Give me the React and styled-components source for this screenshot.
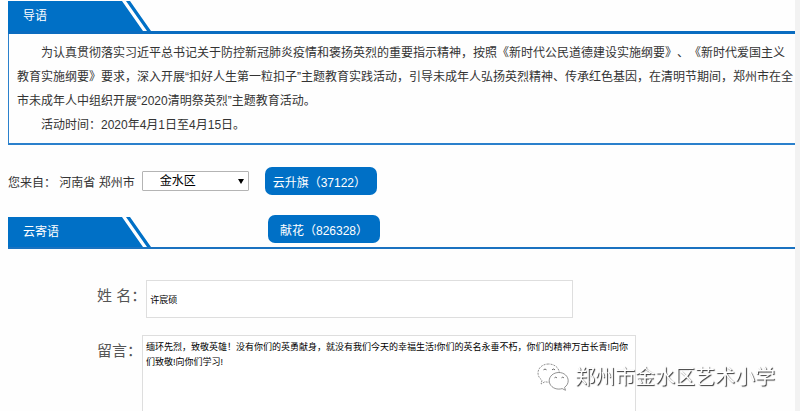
import React, { useState } from "react";
import styled, { createGlobalStyle } from "styled-components";

const GlobalStyle = createGlobalStyle`
  * {
    box-sizing: border-box;
  }

  body {
    margin: 0;
    background-color: #fefefe;
    color: #333;
    font-family: "Liberation Sans", "Noto Sans CJK SC", sans-serif;
    font-size: 12px;
    text-spacing-trim: space-all;
  }

  button,
  input,
  select,
  textarea {
    font-family: inherit;
  }
`;

const Page = styled.div`
  display: flex;
  height: 100vh;
  overflow: hidden auto;
  scrollbar-width: none;
`;

const Content = styled.main`
  flex: 1;
  min-width: 0;
  padding: 1px 0 0 8px;
`;

const SideStrip = styled.div`
  position: sticky;
  top: 0;
  width: 5px;
  height: 100vh;
  background-color: #f2f2f2;
`;

const SectionHeader = styled.header`
  display: flex;
  align-items: flex-end;
  border-bottom: ${({ $thick }) => ($thick ? "3px solid #0a6cc0" : "2px solid #1a72c0")};
`;

const SectionTitle = styled.h2`
  width: 143px;
  height: 30px;
  margin: 0;
  padding-left: 15px;
  background-color: #0070c6;
  color: white;
  font-size: 12px;
  font-weight: normal;
  line-height: 30px;
  clip-path: polygon(0 0, 114px 0, 135px 100%, 139px 100%, 118px 0, 122px 0, 143px 100%, 0 100%);
`;

const IntroBody = styled.div`
  padding: 7px 0 6px 8px;
  border: solid #2a80cc;
  border-width: 0 0 2px 1px;
`;

const Paragraph = styled.p`
  margin: 0;
  line-height: 24px;
  text-indent: 24px;
`;

const OriginRow = styled.div`
  display: flex;
  align-items: center;
  padding: 22px 0 20px;
`;

const OriginLabel = styled.label`
  margin-right: 7px;
`;

const SelectWrap = styled.span`
  position: relative;
  width: 107px;
  margin-right: 16px;

  &::after {
    content: "";
    position: absolute;
    top: 8px;
    right: 5px;
    border: 3px solid transparent;
    border-top: 5px solid black;
    border-bottom: 0;
    pointer-events: none;
  }
`;

const Select = styled.select`
  display: block;
  width: 100%;
  height: 20px;
  padding: 0 17px;
  border: 1px solid #b4b4b4;
  border-radius: 1px;
  background-color: white;
  color: black;
  font-size: 12px;
  appearance: none;
`;

const ActionButton = styled.button`
  width: 112px;
  height: 28px;
  padding: 0 8px;
  border: none;
  border-radius: 7px;
  background-color: #0070c6;
  color: white;
  font-size: 12px;
  text-align: ${({ $align }) => $align || "center"};
  white-space: nowrap;
  cursor: pointer;
`;

const FlowerButton = styled(ActionButton)`
  margin: 0 0 4px 117px;
`;

const Form = styled.form`
  display: flex;
  flex-direction: column;
  gap: 17px;
  padding: 31px 16px 20px 89px;
`;

const Field = styled.div`
  display: flex;
  align-items: flex-start;
`;

const FieldLabel = styled.label`
  flex-shrink: 0;
  color: #555;
  font-size: 15px;
  line-height: 32px;
`;

const NameInput = styled.input`
  flex: 0 1 427px;
  min-width: 0;
  height: 38px;
  padding: 0 3px;
  border: 1px solid #dedede;
  background-color: white;
  color: black;
  font-size: 9px;
`;

const MessageInput = styled.textarea`
  flex: 0 1 494px;
  min-width: 0;
  height: 120px;
  padding: 4px 3px;
  border: 1px solid #dedede;
  background-color: white;
  color: black;
  font-size: 9px;
  line-height: 15px;
  resize: none;
`;

const Watermark = styled.div`
  position: fixed;
  right: 25px;
  bottom: 19px;
  display: flex;
  align-items: center;
  gap: 6px;
  color: white;
  font-size: 20px;
  line-height: 30px;
  text-shadow: 1px 1px 1px #333;
  pointer-events: none;
`;

function WechatIcon() {
  return (
    <svg width="32" height="28" viewBox="0 0 32 28" fill="white" stroke="#777" strokeWidth="0.8">
      <path d="M11.5 1C5.500 1 1 5 1 10c0 3 1.500 5.500 4 7.200L4 21l4-2.300c1.100.300 2.300.500 3.500.500 6 0 10.800-4.100 10.800-9.200S17.500 1 11.500 1z" strokeDasharray="2 1" />
      <path d="M21.800 9.500c-5.300 0-9.600 3.700-9.600 8.300s4.300 8.300 9.600 8.300c1.200 0 2.300-.200 3.400-.500l3.300 1.700-.900-3c2.200-1.500 3.600-3.900 3.600-6.500 0-4.600-4.100-8.300-9.400-8.300z" />
      <path d="M6.500 6.800q1.500-1.500 3 0M15 6.800q1.500-1.500 3 0M17.500 14.800q1.200-1.200 2.400 0M24.500 14.800q1.200-1.200 2.400 0" fill="none" stroke="#444" />
    </svg>
  );
}

export default function App() {
  const [district, setDistrict] = useState("金水区");
  const [name, setName] = useState("许宸硕");
  const [message, setMessage] = useState(
    "缅环先烈，致敬英雄！没有你们的英勇献身，就没有我们今天的幸福生活!你们的英名永垂不朽，你们的精神万古长青!向你们致敬!向你们学习!"
  );

  return (
    <>
      <GlobalStyle />
      <Page>
        <Content>
          <section>
            <SectionHeader $thick>
              <SectionTitle>导语</SectionTitle>
            </SectionHeader>
            <IntroBody>
              <Paragraph>
                为认真贯彻落实习近平总书记关于防控新冠肺炎疫情和褒扬英烈的重要指示精神，按照《新时代公民道德建设实施纲要》、《新时代爱国主义教育实施纲要》要求，深入开展“扣好人生第一粒扣子”主题教育实践活动，引导未成年人弘扬英烈精神、传承红色基因，在清明节期间，郑州市在全市未成年人中组织开展“2020清明祭英烈”主题教育活动。
              </Paragraph>
              <Paragraph>活动时间：2020年4月1日至4月15日。</Paragraph>
            </IntroBody>
          </section>

          <OriginRow>
            <OriginLabel htmlFor="district">您来自： 河南省 郑州市</OriginLabel>
            <SelectWrap>
              <Select id="district" value={district} onChange={(e) => setDistrict(e.target.value)}>
                <option>金水区</option>
              </Select>
            </SelectWrap>
            <ActionButton type="button" $align="left">
              云升旗（37122）
            </ActionButton>
          </OriginRow>

          <section>
            <SectionHeader>
              <SectionTitle>云寄语</SectionTitle>
              <FlowerButton type="button">献花（826328）</FlowerButton>
            </SectionHeader>
            <Form>
              <Field>
                <FieldLabel htmlFor="name">姓 名：</FieldLabel>
                <NameInput id="name" value={name} onChange={(e) => setName(e.target.value)} />
              </Field>
              <Field>
                <FieldLabel htmlFor="message">留言：</FieldLabel>
                <MessageInput id="message" value={message} onChange={(e) => setMessage(e.target.value)} />
              </Field>
            </Form>
          </section>
        </Content>
        <SideStrip />
      </Page>
      <Watermark>
        <WechatIcon />
        郑州市金水区艺术小学
      </Watermark>
    </>
  );
}
